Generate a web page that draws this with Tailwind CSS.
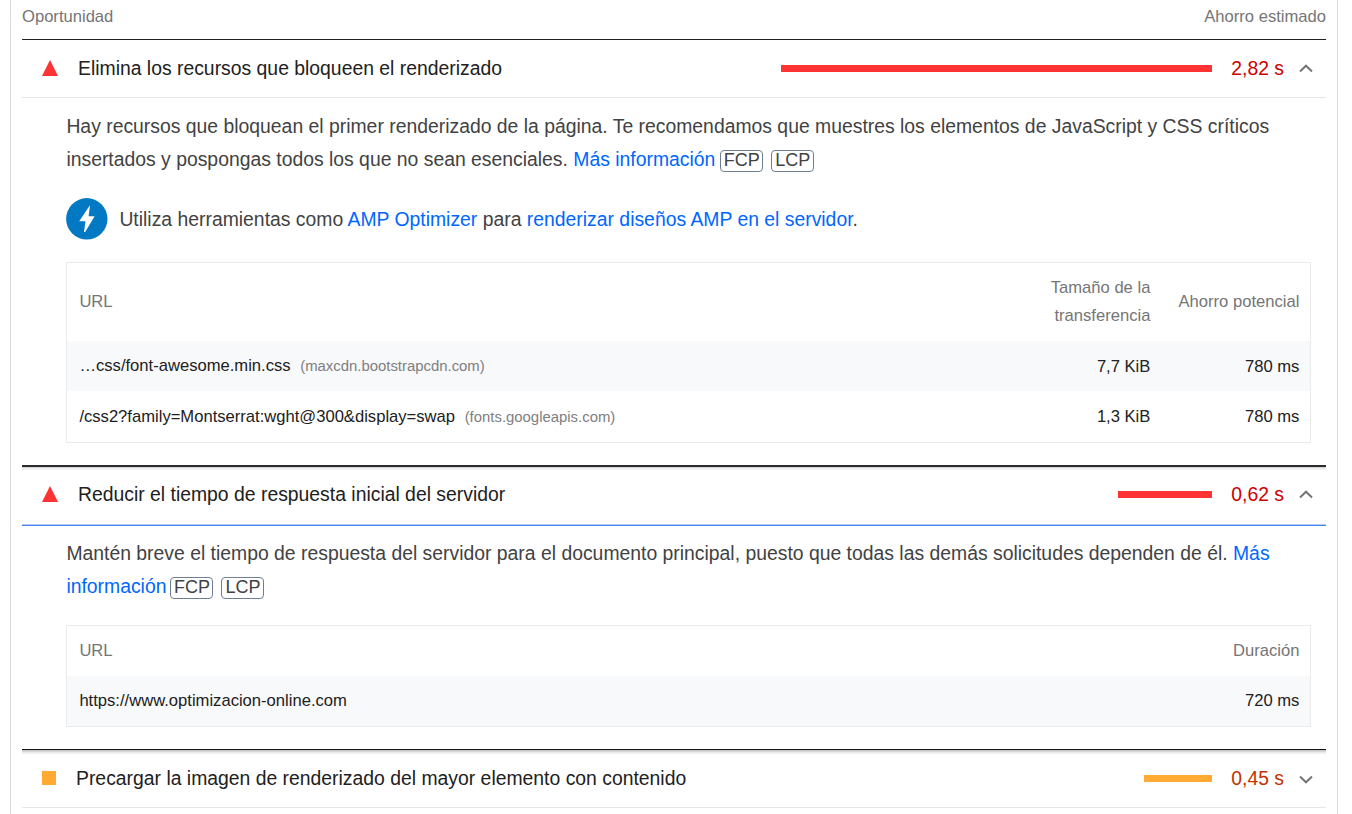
<!DOCTYPE html>
<html lang="es">
<head>
  <meta charset="UTF-8" />
  <meta name="viewport" content="width=device-width, initial-scale=1.0" />
  <title>Oportunidades</title>
  <script src="https://cdn.jsdelivr.net/npm/@tailwindcss/browser@4"></script>
</head>
<body class="bg-white text-[#212121] font-['Liberation_Sans',Arial,sans-serif] overflow-hidden">

  <div class="ml-[10px] w-[1328px] h-[814px] px-[11px] border-x border-[#dadada] overflow-hidden">

    <div class="flex justify-between h-[39px] pt-[5px] text-[16.6px] leading-[24px] text-[#757575]">
      <span>Oportunidad</span>
      <span>Ahorro estimado</span>
    </div>

    <!-- Render-blocking resources -->
    <section class="border-t border-[#212121]">
      <div class="flex items-center h-[58px] pl-5 pr-[13px] border-b border-[#e6e6e6] text-[19.37px]">
        <svg class="w-4 h-4 mb-px" viewBox="0 0 16 16"><path d="M8 0L16 16H0Z" fill="#ff3333" /></svg>
        <span class="ml-5">Elimina los recursos que bloqueen el renderizado</span>
        <div class="ml-auto w-[431px] h-[7px] bg-[#ff3333]"></div>
        <span class="w-[72px] text-right text-[#cc0000]">2,82 s</span>
        <svg class="ml-[15px] w-[14px] h-[9px]" viewBox="0 0 14 9" fill="none" stroke="#757575" stroke-width="2"><path d="M1 7.5L7 1.7L13 7.5" /></svg>
      </div>
      <div class="h-[367px] pl-[44.4px] pr-[14px] pt-[12px]">
        <p class="text-[19.38px] leading-[33px] text-[#424242] whitespace-nowrap">Hay recursos que bloquean el primer renderizado de la página. Te recomendamos que muestres los elementos de JavaScript y CSS críticos<br />insertados y pospongas todos los que no sean esenciales. <a class="text-[#0066ff]">Más información</a><span class="inline-block ml-[5px] w-[43px] h-[22px] text-center leading-[19px] border-[1.5px] border-[#6f7f93] rounded-[4px] text-[18px]">FCP</span><span class="inline-block ml-[8px] w-[43px] h-[22px] text-center leading-[19px] border-[1.5px] border-[#6f7f93] rounded-[4px] text-[18px]">LCP</span></p>
        <div class="flex items-center mt-[22px] h-[42px] text-[19.37px] text-[#424242] whitespace-nowrap">
          <svg class="w-[42px] h-[42px] mr-[11px]" viewBox="0 0 42 42"><circle cx="20.8" cy="20.8" r="20.7" fill="#0379c4" /><path d="M23.6 7.8L13.2 23.2H19.5L18 34H19.2L28.6 18.2H22.6L24 7.8Z" fill="#fff" /></svg>
          <span class="pt-px">Utiliza herramientas como <a class="text-[#0066ff]">AMP Optimizer</a> para <a class="text-[#0066ff]">renderizar diseños AMP en el servidor</a>.</span>
        </div>
        <table class="mt-[22px] w-[1245px] table-fixed border border-[#ebebeb] border-separate border-spacing-0 text-[16.6px] leading-[28px]">
          <thead class="text-[#757575]">
            <tr class="h-[78px]">
              <th class="pl-3 text-left font-normal">URL</th>
              <th class="w-[138px] pr-[11px] text-right font-normal">Tamaño de la transferencia</th>
              <th class="w-[149px] pr-[11px] text-right font-normal">Ahorro potencial</th>
            </tr>
          </thead>
          <tbody>
            <tr class="h-[50px] bg-[#f8f9fb]">
              <td class="pl-3">…css/font-awesome.min.css <span class="ml-[5px] text-[14.9px] text-[#808080]">(maxcdn.bootstrapcdn.com)</span></td>
              <td class="pt-px pr-[11px] text-right">7,7 KiB</td>
              <td class="pt-px pr-[11px] text-right">780 ms</td>
            </tr>
            <tr class="h-[51px]">
              <td class="pl-3">/css2?family=Montserrat:wght@300&amp;display=swap <span class="ml-[5px] text-[14.9px] text-[#808080]">(fonts.googleapis.com)</span></td>
              <td class="pr-[11px] text-right">1,3 KiB</td>
              <td class="pr-[11px] text-right">780 ms</td>
            </tr>
          </tbody>
        </table>
      </div>
    </section>

    <!-- Server response time -->
    <section class="border-t-2 border-[#2b2b2f]">
      <div class="flex items-center h-[59px] pl-5 pr-[13px] pb-[3px] border-b border-b-[#4285f4] text-[19.37px] shadow-[inset_0_3px_3px_-2px_rgba(0,0,0,0.25),inset_0_-1px_0_#b5cbee]">
        <svg class="w-4 h-4 mb-px" viewBox="0 0 16 16"><path d="M8 0L16 16H0Z" fill="#ff3333" /></svg>
        <span class="ml-5">Reducir el tiempo de respuesta inicial del servidor</span>
        <div class="ml-auto w-[94px] h-[7px] bg-[#ff3333]"></div>
        <span class="w-[72px] text-right text-[#cc0000]">0,62 s</span>
        <svg class="ml-[15px] w-[14px] h-[9px]" viewBox="0 0 14 9" fill="none" stroke="#757575" stroke-width="2"><path d="M1 7.5L7 1.7L13 7.5" /></svg>
      </div>
      <div class="h-[223px] pl-[44.4px] pr-[14px] pt-[11px]">
        <p class="text-[19.38px] leading-[33px] text-[#424242] whitespace-nowrap">Mantén breve el tiempo de respuesta del servidor para el documento principal, puesto que todas las demás solicitudes dependen de él. <a class="text-[#0066ff]">Más<br />información</a><span class="inline-block ml-[4px] w-[43px] h-[22px] text-center leading-[19px] border-[1.5px] border-[#6f7f93] rounded-[4px] text-[18px]">FCP</span><span class="inline-block ml-[8px] w-[43px] h-[22px] text-center leading-[19px] border-[1.5px] border-[#6f7f93] rounded-[4px] text-[18px]">LCP</span></p>
        <table class="mt-[22px] w-[1245px] table-fixed border border-[#ebebeb] border-separate border-spacing-0 text-[16.6px] leading-[28px]">
          <thead class="text-[#757575]">
            <tr class="h-[50px]">
              <th class="pl-3 text-left font-normal">URL</th>
              <th class="w-[149px] pr-[11px] text-right font-normal">Duración</th>
            </tr>
          </thead>
          <tbody>
            <tr class="h-[50px] bg-[#f8f9fb]">
              <td class="pl-3">https://www.optimizacion-online.com</td>
              <td class="pr-[11px] text-right">720 ms</td>
            </tr>
          </tbody>
        </table>
      </div>
    </section>

    <!-- Largest contentful image preload -->
    <section class="border-t border-[#121212]">
      <div class="flex items-center h-[58px] pl-5 pr-[13px] border-b border-[#e6e6e6] text-[19.37px] shadow-[inset_0_4px_3px_-2px_rgba(0,0,0,0.25)]">
        <div class="w-[14px] h-[14px] mb-px bg-[#ffaa33]"></div>
        <span class="ml-5">Precargar la imagen de renderizado del mayor elemento con contenido</span>
        <div class="ml-auto w-[68px] h-[7px] bg-[#ffaa33]"></div>
        <span class="w-[72px] text-right text-[#c33300]">0,45 s</span>
        <svg class="ml-[15px] mt-px w-[14px] h-[9px]" viewBox="0 0 14 9" fill="none" stroke="#757575" stroke-width="2"><path d="M1 1.5L7 7.3L13 1.5" /></svg>
      </div>
    </section>

  </div>

</body>
</html>
